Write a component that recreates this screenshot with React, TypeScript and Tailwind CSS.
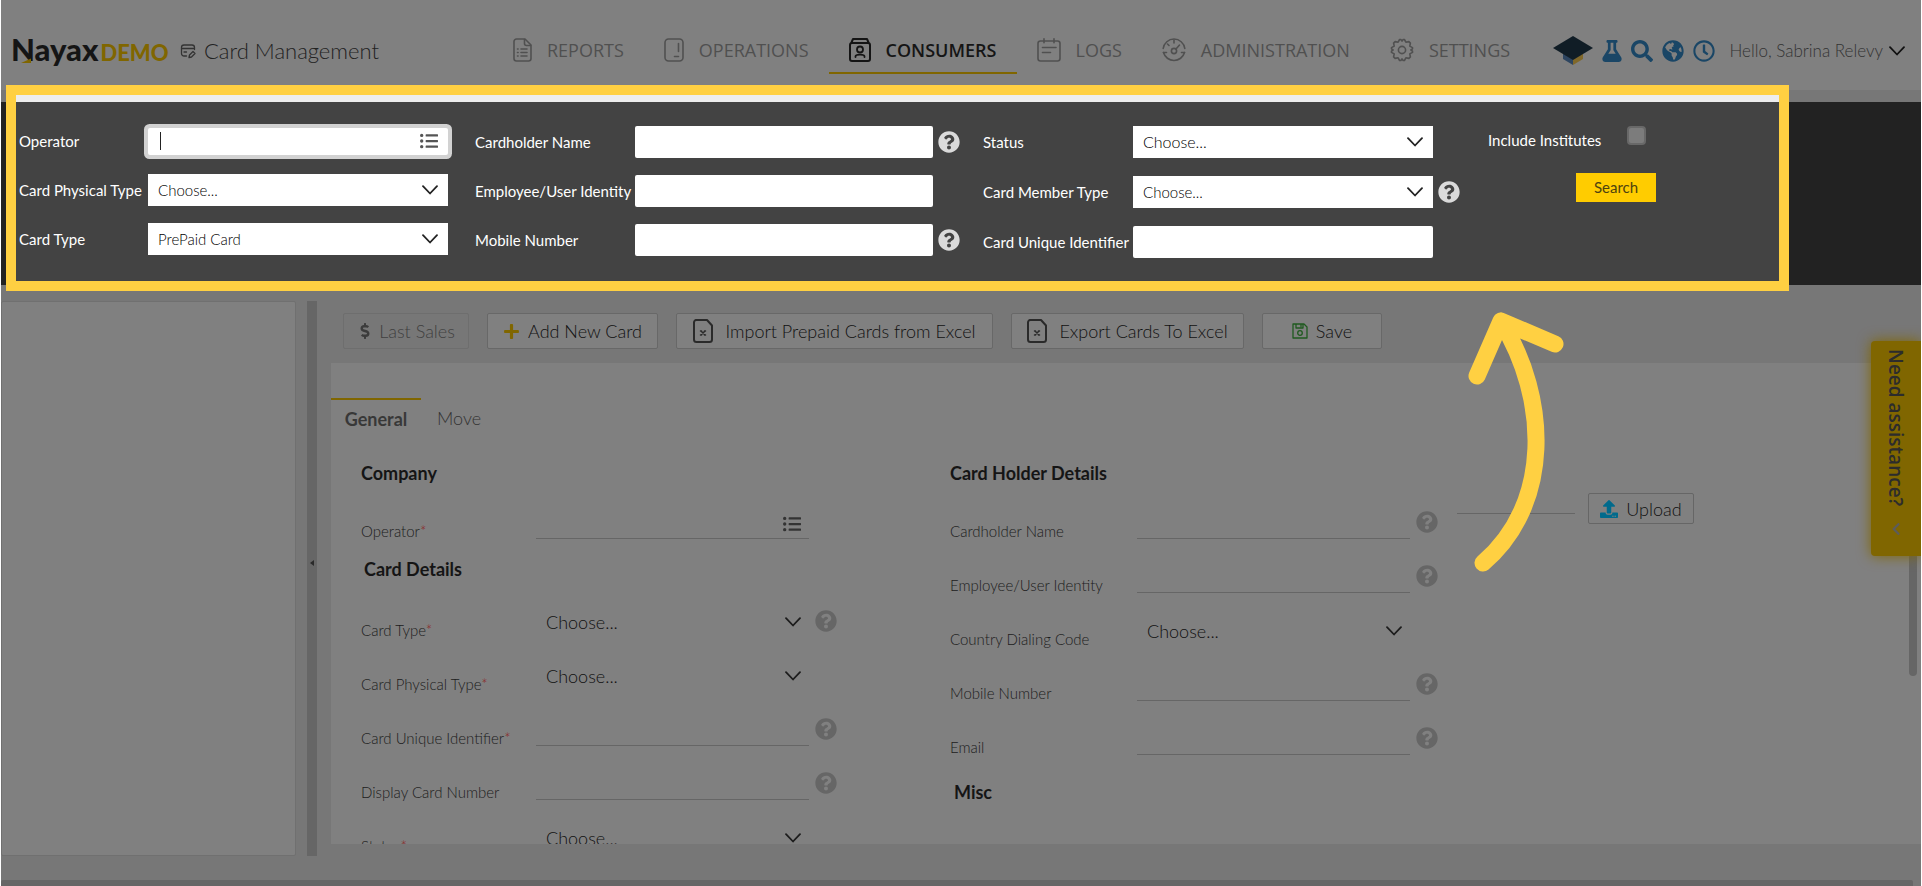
import { useState, type ReactNode } from 'react'
import clsx from 'clsx'
import {
  FaChevronLeft,
  FaDollarSign,
  FaFlask,
  FaGlobeAmericas,
  FaListUl,
  FaPlus,
  FaQuestionCircle,
  FaRegClock,
  FaSearch,
  FaUpload,
} from 'react-icons/fa'

function Svg({ children, className, box = '0 0 24 24' }: { children: ReactNode; className?: string; box?: string }) {
  return (
    <svg
      viewBox={box}
      className={clsx('shrink-0', className)}
      fill="none"
      stroke="currentColor"
      strokeWidth="1.6"
      strokeLinecap="round"
      strokeLinejoin="round"
      aria-hidden="true"
    >
      {children}
    </svg>
  )
}

function Chevron({ className }: { className?: string }) {
  return (
    <Svg box="0 0 16 10" className={clsx('w-4 h-2.5', className)}>
      <path d="M1 1.2l7 7.3 7-7.3" strokeWidth="1.8" />
    </Svg>
  )
}

const navItems = [
  {
    label: 'REPORTS',
    icon: (
      <Svg box="0 0 20 24" className="w-5 h-6">
        <path d="M4.500 1h8.500l6 6v13.500a2.500 2.500 0 0 1-2.500 2.500h-12a2.500 2.500 0 0 1-2.500-2.500v-17a2.500 2.500 0 0 1 2.500-2.500z" />
        <path d="M12.500 1.500v4a2 2 0 0 0 2 2h4M9 11h6M9 14.500h6M9 18h6M5.500 11h.6M5.500 14.500h.6M5.500 18h.6" />
      </Svg>
    ),
  },
  {
    label: 'OPERATIONS',
    icon: (
      <Svg box="0 0 20 24" className="w-5 h-6">
        <rect x="1" y="1" width="18" height="22" rx="3.500" />
        <path d="M14.500 5.500v8M10.500 18.500h4" />
      </Svg>
    ),
  },
  {
    label: 'CONSUMERS',
    icon: (
      <Svg box="0 0 22 24" className="w-[22px] h-6">
        <rect x="1" y="5" width="20" height="18" rx="2" strokeWidth="2" />
        <path d="M2.500 4.500l1.500-3.500h14l1.500 3.500" strokeWidth="2" />
        <circle cx="11" cy="11.500" r="3" strokeWidth="1.800" />
        <path d="M6.500 19v-.5c0-2.500 9-2.500 9 0v.5" strokeWidth="1.800" />
      </Svg>
    ),
  },
  {
    label: 'LOGS',
    icon: (
      <Svg box="0 0 24 24" className="size-6">
        <rect x="1" y="3" width="22" height="20" rx="2.500" />
        <path d="M7 0.800v4M17 0.800v4M5.500 9.500h13.500M5.500 14.500h8" />
      </Svg>
    ),
  },
  {
    label: 'ADMINISTRATION',
    icon: (
      <Svg className="size-6">
        <path d="M1.200 10.500a10.900 10.900 0 0 1 21.600 0M22.500 14.500a10.900 10.900 0 0 1-21 0" />
        <circle cx="12" cy="13" r="2.600" />
        <path d="M14 11l3.500-4M12 2v3M5.500 6l1.500 1.500M1.500 14.500h3M19.500 14.500h3" />
      </Svg>
    ),
  },
  {
    label: 'SETTINGS',
    icon: (
      <Svg className="size-6">
        <circle cx="12" cy="12" r="3.600" />
        <path d="M9.600 1.500h1.200l1.200 1.600 1.200-1.600h1.200l1.500 2.700 3-.6 1.500 1.500-.6 3 2.700 1.500v1.200l-1.600 1.200 1.600 1.200v1.200l-2.700 1.500.6 3-1.500 1.500-3-.6-1.500 2.700h-1.200l-1.200-1.600-1.200 1.600h-1.200l-1.500-2.700-3 .6-1.500-1.500.6-3-2.700-1.500v-1.200l1.600-1.200-1.600-1.200v-1.200l2.700-1.500-.6-3 1.500-1.500 3 .6z" />
      </Svg>
    ),
  },
]

function Header() {
  const [active, setActive] = useState('CONSUMERS')

  return (
    <header className="flex h-[90px] items-center bg-[#808080] pt-3">
      <div className="flex w-[491px] shrink-0 items-center pl-2.5">
        <div className="relative flex w-[155px] items-baseline">
          <span className="text-[31px] leading-8 font-black text-[#151515]">Nayax</span>
          <span className="ml-0.5 text-[22px] leading-8 font-black text-[#806600]">DEMO</span>
          <Svg box="0 0 10 5" className="absolute bottom-1.5 left-2.5 w-2.5 h-[5px] text-[#806600]">
            <path d="M0 5l10-4.500v4.500z" fill="currentColor" stroke="none" />
          </Svg>
        </div>
        <Svg box="0 0 16 16" className="ml-3.5 size-4 text-[#333]">
          <path
            d="M6.500 13H4a2.500 2.500 0 0 1-2.500-2.500v-6A2.500 2.500 0 0 1 4 2h8a2.500 2.500 0 0 1 2.500 2.500v2M1.500 5.500h13M4 9h2.500M9 14.500l.5-2.500 3.500-3.500 2 2-3.500 3.500z"
            strokeWidth="1.3"
          />
        </Svg>
        <h1 className="ml-2 text-[22px] leading-8 font-light text-[#222]">Card Management</h1>
      </div>
      <nav className="flex font-['Open_Sans',sans-serif]">
        {navItems.map(({ label, icon }) => (
          <a
            key={label}
            href="#"
            onClick={() => setActive(label)}
            className={clsx('flex h-[46px] items-center gap-[15px] border-b-2 px-5 text-lg', {
              'border-[#806600] font-semibold text-[#151515]': active === label,
              'border-transparent text-[#505050]': active !== label,
            })}
          >
            {icon}
            {label}
          </a>
        ))}
      </nav>
      <div className="ml-auto flex items-center gap-[9px] pr-4 text-[22px] text-[#1a4666]">
        <svg viewBox="0 0 40 30" className="h-[30px] w-10" aria-hidden="true">
          <path d="M10 15l10 6v8l-10-6z" fill="#2d4560" />
          <path d="M20 21l10-6v8l-10 6z" fill="#80682a" />
          <path d="M20 0l20 12-20 12L0 12z" fill="#101d26" />
        </svg>
        <FaFlask className="w-5" />
        <FaSearch />
        <FaGlobeAmericas />
        <FaRegClock />
        <button type="button" className="ml-1.5 flex items-center gap-1.5 text-[17px] font-light text-[#333]">
          Hello, Sabrina Relevy
          <Chevron className="text-[#111]" />
        </button>
      </div>
    </header>
  )
}

function Help({ className }: { className?: string }) {
  return (
    <button type="button" aria-label="Help" className={clsx('shrink-0 text-[22px]', className)}>
      <FaQuestionCircle />
    </button>
  )
}

type SearchFieldProps = {
  id: string
  label: string
  kind?: 'text' | 'select' | 'picker'
  value?: string
  help?: boolean
  labelWidth: string
  width: string
  textSize?: string
}

function SearchField({ id, label, kind = 'text', value, help, labelWidth, width, textSize = 'text-[15px]' }: SearchFieldProps) {
  return (
    <div className="flex h-8 items-center">
      <label htmlFor={id} className={clsx('shrink-0 text-[15px] whitespace-nowrap text-white', labelWidth)}>
        {label}
      </label>
      <div className={clsx('relative h-8 shrink-0', width)}>
        {kind === 'select' ? (
          <>
            <select id={id} className={clsx('size-full appearance-none bg-white px-2.5 font-light text-black', textSize)}>
              <option>{value}</option>
            </select>
            <Chevron className="pointer-events-none absolute top-[11px] right-2.5 text-[#222]" />
          </>
        ) : kind === 'picker' ? (
          <>
            <input
              id={id}
              type="text"
              className="my-[3px] h-[27px] w-full rounded-xs bg-white px-3 text-sm ring-4 ring-[#d2d2d2] outline-none"
            />
            <span className="absolute top-[7px] left-3 h-[18px] w-px bg-[#222]" />
            <button type="button" aria-label="Choose operator" className="absolute top-[7px] right-2.5 text-lg text-[#555]">
              <FaListUl />
            </button>
          </>
        ) : (
          <input id={id} type="text" className="size-full rounded-xs bg-white px-3 text-sm" />
        )}
      </div>
      {help && <Help className="ml-[5px] text-[#dadada]" />}
    </div>
  )
}

function SearchPanel() {
  return (
    <section>
      <div className="h-3 bg-[#777]" />
      <div className="flex h-[183px] bg-[#222]">
        <form
          onSubmit={(e) => e.preventDefault()}
          className="relative -mt-[7px] mr-[142px] ml-[15px] flex h-[186px] flex-1 items-start border-t-7 border-[#ededed] bg-[#434343] pl-[3px] outline-10 outline-[#ffd042] outline-solid"
        >
          <div className="flex w-[456px] shrink-0 flex-col gap-[17px] pt-[23px]">
            <SearchField id="s-operator" label="Operator" kind="picker" labelWidth="w-[129px]" width="w-[300px]" />
            <SearchField id="s-physical" label="Card Physical Type" kind="select" value="Choose..." labelWidth="w-[129px]" width="w-[300px]" />
            <SearchField id="s-type" label="Card Type" kind="select" value="PrePaid Card" labelWidth="w-[129px]" width="w-[300px]" />
          </div>
          <div className="flex w-[508px] shrink-0 flex-col gap-[17px] pt-6">
            <SearchField id="s-holder" label="Cardholder Name" help labelWidth="w-[160px]" width="w-[298px]" />
            <SearchField id="s-employee" label="Employee/User Identity" labelWidth="w-[160px]" width="w-[298px]" />
            <SearchField id="s-mobile" label="Mobile Number" help labelWidth="w-[160px]" width="w-[298px]" />
          </div>
          <div className="flex w-[505px] shrink-0 flex-col gap-[18px] pt-6">
            <SearchField id="s-status" label="Status" kind="select" value="Choose..." labelWidth="w-[150px]" width="w-[300px]" textSize="text-base" />
            <SearchField id="s-member" label="Card Member Type" kind="select" value="Choose..." help labelWidth="w-[150px]" width="w-[300px]" />
            <SearchField id="s-unique" label="Card Unique Identifier" labelWidth="w-[150px]" width="w-[300px]" />
          </div>
          <div className="flex w-[168px] shrink-0 flex-col items-end gap-[21px] pt-6">
            <div className="flex w-full items-start justify-between pr-2.5">
              <label htmlFor="s-institutes" className="pt-[3px] text-[15px] whitespace-nowrap text-white">
                Include Institutes
              </label>
              <input
                id="s-institutes"
                type="checkbox"
                className="size-[19px] appearance-none rounded-sm border-2 border-[#686868] bg-[#7c7c7c]"
              />
            </div>
            <button type="submit" className="h-[29px] w-20 bg-[#ffcc00] text-[15px] text-[#4d4210]">
              Search
            </button>
          </div>
        </form>
      </div>
    </section>
  )
}

function ExcelIcon() {
  return (
    <Svg box="0 0 20 24" className="w-5 h-6 text-[#2a2a2a]">
      <path d="M4 1h10l5 5.500V20.500a2.500 2.500 0 0 1-2.500 2.500h-13a2.500 2.500 0 0 1-2.500-2.500v-17A2.500 2.500 0 0 1 4 1z" strokeWidth="2" />
      <path d="M8 12l4 4M12 12l-4 4M7.500 12h1M11.500 12h1M7.500 16h1M11.500 16h1" strokeWidth="1.500" />
    </Svg>
  )
}

function ToolButton({ icon, children, className, disabled }: { icon: ReactNode; children: ReactNode; className: string; disabled?: boolean }) {
  return (
    <button
      type="button"
      disabled={disabled}
      className={clsx(
        'flex h-9 items-center justify-center rounded-xs border text-lg font-light whitespace-nowrap',
        disabled ? 'border-[#6e6e6e] text-[#404040]' : 'border-[#686868] bg-[#808080] text-[#111]',
        className
      )}
    >
      {icon}
      {children}
    </button>
  )
}

function Toolbar() {
  return (
    <div className="flex gap-[18px] pl-3">
      <ToolButton disabled className="w-[126px] gap-1.5" icon={<FaDollarSign className="text-base text-[#3c3c3c]" />}>
        Last Sales
      </ToolButton>
      <ToolButton className="w-[171px] gap-2" icon={<FaPlus className="text-[17px] text-[#806600]" />}>
        Add New Card
      </ToolButton>
      <ToolButton className="w-[317px] gap-3" icon={<ExcelIcon />}>
        Import Prepaid Cards from Excel
      </ToolButton>
      <ToolButton className="w-[233px] gap-3" icon={<ExcelIcon />}>
        Export Cards To Excel
      </ToolButton>
      <ToolButton
        className="w-[120px] gap-2"
        icon={
          <Svg box="0 0 16 16" className="size-4 text-[#1f5a1f]">
            <path d="M1 1h11l3 3v11H1zM4 1v4h7V1M9 2v1.500" strokeWidth="1.300" />
            <circle cx="8" cy="10" r="2.300" strokeWidth="1.300" />
          </Svg>
        }
      >
        Save
      </ToolButton>
    </div>
  )
}

type FieldProps = {
  id: string
  label: string
  kind?: 'text' | 'select' | 'picker'
  required?: boolean
  help?: boolean
  wide?: boolean
}

function Field({ id, label, kind = 'text', required, help, wide }: FieldProps) {
  return (
    <div className="flex h-[54px] items-end">
      <label
        htmlFor={id}
        className={clsx('shrink-0 text-[15px] leading-4 font-light text-[#1c1c1c]', wide ? 'w-[187px]' : 'w-[175px]')}
      >
        {label}
        {required && <span className="text-[#8c1c1c]">*</span>}
      </label>
      <div className="relative w-[273px] shrink-0">
        {kind === 'select' ? (
          <>
            <select id={id} className="block h-8 w-full appearance-none bg-transparent px-2.5 text-lg font-light text-[#111]">
              <option>Choose...</option>
            </select>
            <Chevron className="pointer-events-none absolute top-[11px] right-2 text-[#1c1c1c]" />
          </>
        ) : (
          <input id={id} type="text" className="block h-8 w-full border-b border-[#666] bg-transparent px-2.5" />
        )}
        {kind === 'picker' && (
          <button type="button" aria-label="Choose operator" className="absolute right-2 bottom-1.5 text-lg text-[#333]">
            <FaListUl />
          </button>
        )}
      </div>
      {help && <Help className="mb-1.5 ml-1.5 text-[#666]" />}
    </div>
  )
}

function Heading({ children, className }: { children: ReactNode; className?: string }) {
  return <h2 className={clsx('text-lg leading-6 font-bold text-[#151515]', className)}>{children}</h2>
}

function CardForm() {
  return (
    <div className="mt-3.5 min-h-0 flex-1 overflow-hidden bg-[#808080] pt-[35px]">
      <div role="tablist" className="flex h-[63px] items-start text-lg">
        <button type="button" role="tab" aria-selected="true" className="h-10 w-[90px] border-t-2 border-[#806600] text-center font-bold text-[#383838]">
          General
        </button>
        <button type="button" role="tab" aria-selected="false" className="ml-4 h-10 font-light text-[#333]">
          Move
        </button>
      </div>
      <div className="flex items-start pl-[30px]">
        <div className="w-[589px] shrink-0">
          <Heading>Company</Heading>
          <Field id="operator" label="Operator" kind="picker" required />
          <Heading className="mt-[18px] ml-[3px] mb-[3px]">Card Details</Heading>
          <Field id="card-type" label="Card Type" kind="select" required help />
          <Field id="physical-type" label="Card Physical Type" kind="select" required />
          <Field id="unique-id" label="Card Unique Identifier" required help />
          <Field id="display-number" label="Display Card Number" help />
          <Field id="status" label="Status" kind="select" required />
        </div>
        <div className="w-[507px] shrink-0">
          <Heading>Card Holder Details</Heading>
          <Field id="holder-name" label="Cardholder Name" help wide />
          <Field id="employee" label="Employee/User Identity" help wide />
          <Field id="dialing-code" label="Country Dialing Code" kind="select" wide />
          <Field id="mobile" label="Mobile Number" help wide />
          <Field id="email" label="Email" help wide />
          <Heading className="mt-[25px] ml-1">Misc</Heading>
        </div>
        <div className="flex items-start gap-[13px] pt-8">
          <input type="text" aria-label="Photo file" className="h-[21px] w-[118px] border-b border-[#666]" />
          <button
            type="button"
            className="flex h-[31px] w-[106px] items-center justify-center gap-2 rounded-xs border border-[#666] text-lg font-light text-[#111]"
          >
            <FaUpload className="text-[#006a8c]" />
            Upload
          </button>
        </div>
      </div>
    </div>
  )
}

export default function App() {
  return (
    <div className="relative flex h-screen flex-col overflow-hidden border-x border-white bg-[#777] font-['Lato',sans-serif]">
      <Header />
      <SearchPanel />
      <main className="flex min-h-0 flex-1 pt-4">
        <aside className="mb-[30px] w-[295px] shrink-0 rounded-xs border border-[#707070] bg-[#808080]" />
        <div className="mb-[30px] ml-[11px] flex w-2.5 shrink-0 items-center justify-center bg-[#666]">
          <svg viewBox="0 0 4 6" className="mb-8 h-1.5 w-1" aria-hidden="true">
            <path d="M4 0v6L0 3z" fill="#2a2a2a" />
          </svg>
        </div>
        <section className="mb-[42px] ml-3.5 flex min-w-0 flex-1 flex-col pt-3">
          <Toolbar />
          <CardForm />
        </section>
      </main>
      <div className="absolute bottom-0 left-0 right-2 h-1.5 rounded-t-xs bg-[#666]" />
      <div className="absolute top-[400px] right-1 h-[276px] w-2 rounded-sm bg-[#666]" />
      <button
        type="button"
        className="absolute top-[341px] right-0 flex h-[215px] w-[50px] items-center gap-4 rounded-l-sm bg-[#806600] pt-2 font-['Open_Sans',sans-serif] text-[19px] font-semibold text-[#2c2c2c] shadow-[0_0_14px_#806600] [writing-mode:vertical-rl]"
      >
        Need assistance?
        <FaChevronLeft className="size-3.5 shrink-0 text-[#5c5c5c]" />
      </button>
      <svg viewBox="0 0 100 264" className="absolute top-[310px] left-[1465px] h-[264px] w-[100px]" aria-hidden="true">
        <path
          d="M11 66L35 11l54 23M35 11c48 78 51 183-18 242"
          fill="none"
          stroke="#ffd042"
          strokeWidth="17"
          strokeLinecap="round"
          strokeLinejoin="round"
        />
      </svg>
    </div>
  )
}
